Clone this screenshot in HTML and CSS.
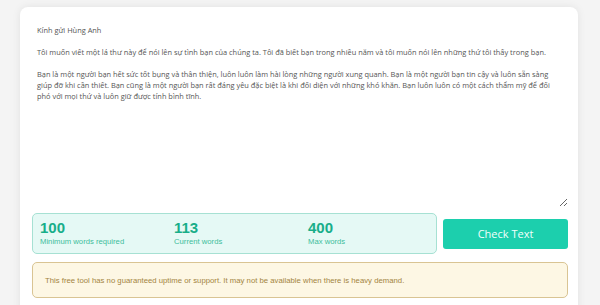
FILE: index.html
```html
<!DOCTYPE html>
<html lang="vi">
<head>
    <meta charset="UTF-8">
    <meta name="viewport" content="width=device-width, initial-scale=1.0">
    <title>Word Checker</title>
    <link rel="stylesheet" href="styles.css">
</head>
<body>
    <div class="card">
        <textarea class="editor">Kính gửi Hùng Anh

Tôi muốn viết một lá thư này để nói lên sự tình bạn của chúng ta. Tôi đã biết bạn trong nhiều năm và tôi muốn nói lên những thứ tôi thấy trong bạn.

Bạn là một người bạn hết sức tốt bụng và thân thiện, luôn luôn làm hài lòng những người xung quanh. Bạn là một người bạn tin cậy và luôn sẵn sàng giúp đỡ khi cần thiết. Bạn cũng là một người bạn rất đáng yêu đặc biệt là khi đối diện với những khó khăn. Bạn luôn luôn có một cách thẩm mỹ để đối phó với mọi thứ và luôn giữ được tính bình tĩnh.</textarea>

        <div class="actions">
            <div class="stats">
                <div class="stat">
                    <span class="num">100</span>
                    <span class="label">Minimum words required</span>
                </div>
                <div class="stat">
                    <span class="num">113</span>
                    <span class="label">Current words</span>
                </div>
                <div class="stat">
                    <span class="num">400</span>
                    <span class="label">Max words</span>
                </div>
            </div>
            <button class="check-btn">Check Text</button>
        </div>

        <div class="notice">
            This free tool has no guaranteed uptime or support. It may not be available when there is heavy demand.
        </div>
    </div>
</body>
</html>
```

FILE: styles.css
```css
body {
    margin: 0;
    padding: 7px 22px 0 20px;
    background-color: #f4f4f4;
    font-family: "Liberation Sans", Arial, sans-serif;
}
.card {
    background-color: #fff;
    border-radius: 8px;
    box-shadow: 0 0 8px rgba(0, 0, 0, 0.08);
    padding: 11px 10px 20px 12px;
}
.editor {
    display: block;
    box-sizing: border-box;
    width: 100%;
    height: 189px;
    border: none;
    outline: none;
    padding: 7px 5px;
    font-family: "Open Sans", "Noto Sans", sans-serif;
    font-size: 7.42px;
    line-height: 11px;
    color: #555;
    background: #fff;
    resize: vertical;
}
.actions {
    display: flex;
    align-items: center;
    gap: 6px;
    margin-top: 6px;
}
.stats {
    box-sizing: border-box;
    width: 405px;
    height: 41px;
    display: grid;
    grid-template-columns: 134px 134px 1fr;
    padding: 5px 7px 0;
    background-color: #e5f9f5;
    border: 1px solid #a6e1d3;
    border-radius: 5px;
}
.stat {
    display: flex;
    flex-direction: column;
}
.num {
    font-size: 15px;
    font-weight: bold;
    line-height: 17px;
    color: #18ae89;
}
.label {
    font-size: 7.7px;
    line-height: 12px;
    color: #3dbd9b;
}
.check-btn {
    flex: 1;
    height: 30px;
    border: none;
    border-radius: 3px;
    background-color: #1ccfad;
    color: #f2fffc;
    font-family: "Open Sans", "Noto Sans", sans-serif;
    font-size: 11px;
    cursor: pointer;
}
.notice {
    box-sizing: border-box;
    height: 36px;
    margin-top: 8px;
    padding: 0 12px;
    display: flex;
    align-items: center;
    background-color: #fdf7e4;
    border: 1px solid #d9c493;
    border-radius: 5px;
    color: #a3843f;
    font-size: 7.75px;
}
```
